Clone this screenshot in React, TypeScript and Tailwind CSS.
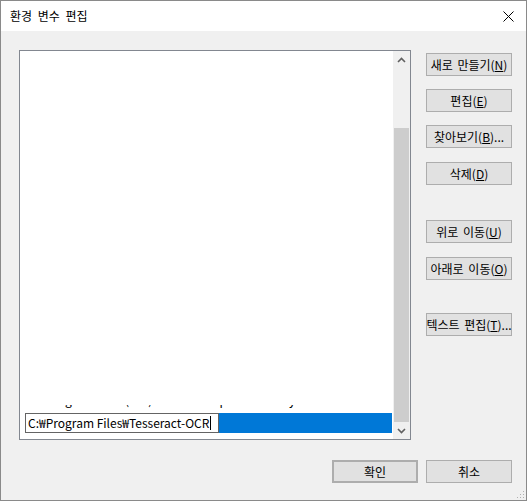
import clsx from "clsx";
import { ReactNode } from "react";

const Btn = ({
  children,
  className,
}: {
  children: ReactNode;
  className?: string;
}) => (
  <div
    className={clsx(
      "h-[23px] w-[86px] flex items-center justify-center bg-[#e1e1e1] border border-[#adadad] text-[12px] text-black leading-none whitespace-nowrap [word-spacing:2px]",
      className
    )}
  >
    {children}
  </div>
);

const Chevron = ({ down }: { down?: boolean }) => (
  <svg width="9" height="6" viewBox="0 0 9 6" className={down ? "rotate-180" : ""}>
    <path d="M1 5 L4.5 1.5 L8 5" fill="none" stroke="#606060" strokeWidth="1.6" />
  </svg>
);

const App: React.FC = () => {
  return (
    <div className="w-[527px] h-[501px] border border-[#8a8a8a] flex flex-col font-['Noto_Sans_CJK_KR',sans-serif] text-black select-none">
      {/* title bar */}
      <div className="h-[30px] bg-white flex items-center justify-between pl-[9px] pr-[12px]">
        <span className="text-[12px] [word-spacing:3px]">환경 변수 편집</span>
        <svg width="11" height="11" viewBox="0 0 11 11">
          <path d="M0.5 0.5 L10.5 10.5 M10.5 0.5 L0.5 10.5" stroke="#000" strokeWidth="1" />
        </svg>
      </div>

      <div className="flex-1 bg-[#f0f0f0] flex flex-col pl-[18px] pr-[14px] pt-[19px] relative">
        <div className="flex gap-[15px]">
          {/* list box */}
          <div className="w-[392px] h-[390px] border border-[#828790] bg-white flex">
            <div className="flex-1 flex flex-col justify-end pb-[6px]">
              {/* previous entry, only its descenders show above the edit box */}
              <div className="h-[4px] overflow-hidden pl-[8px] mb-[4px]">
                <div className="text-[12px] leading-[16px] whitespace-nowrap -mt-[13px]">
                  C:₩Program Files (x86)₩NVIDIA Corporation₩PhysX₩Common
                </div>
              </div>
              <div className="flex h-[20px] pl-[5px] pr-[1px]">
                <div className="w-[194px] h-[20px] bg-white border border-[#646464] flex items-center pl-[2px] text-[12px] whitespace-nowrap overflow-hidden">
                  C:₩Program Files₩Tesseract-OCR
                  <span className="w-[1px] h-[14px] bg-black ml-[1px]" />
                </div>
                <div className="flex-1 bg-[#0078d7]" />
              </div>
            </div>
            {/* scrollbar */}
            <div className="w-[17px] bg-[#f0f0f0] flex flex-col">
              <div className="h-[17px] flex items-center justify-center">
                <Chevron />
              </div>
              <div className="flex-1 flex flex-col px-[1px]">
                <div className="h-[60px]" />
                <div className="flex-1 bg-[#cdcdcd]" />
              </div>
              <div className="h-[17px] flex items-center justify-center">
                <Chevron down />
              </div>
            </div>
          </div>

          {/* side buttons */}
          <div className="flex flex-col pt-[3px]">
            <Btn>
              새로 만들기(<u>N</u>)
            </Btn>
            <Btn className="mt-[13px]">
              편집(<u>E</u>)
            </Btn>
            <Btn className="mt-[13px]">
              찾아보기(<u>B</u>)...
            </Btn>
            <Btn className="mt-[14px]">
              삭제(<u>D</u>)
            </Btn>
            <Btn className="mt-[35px]">
              위로 이동(<u>U</u>)
            </Btn>
            <Btn className="mt-[14px]">
              아래로 이동(<u>O</u>)
            </Btn>
            <Btn className="mt-[33px]">
              텍스트 편집(<u>T</u>)...
            </Btn>
          </div>
        </div>

        {/* dialog buttons */}
        <div className="flex justify-end gap-[8px] mt-[20px]">
          <Btn className="border-2 border-[#0078d7]">확인</Btn>
          <Btn>취소</Btn>
        </div>

        {/* size grip */}
        <svg width="8" height="8" viewBox="0 0 8 8" className="absolute right-[1px] bottom-[1px]">
          <rect x="6" y="0" width="1" height="1" fill="#b0b0b0" />
          <rect x="3" y="3" width="1" height="1" fill="#b0b0b0" />
          <rect x="6" y="3" width="1" height="1" fill="#b0b0b0" />
          <rect x="0" y="6" width="1" height="1" fill="#b0b0b0" />
          <rect x="3" y="6" width="1" height="1" fill="#b0b0b0" />
          <rect x="6" y="6" width="1" height="1" fill="#b0b0b0" />
        </svg>
      </div>
    </div>
  );
};

export default App;
